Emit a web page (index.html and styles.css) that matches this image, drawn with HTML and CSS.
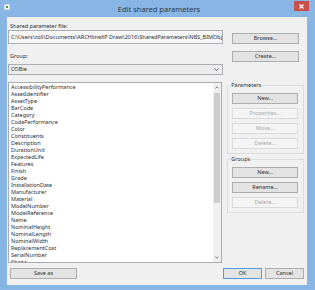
FILE: index.html
```html
<!DOCTYPE html>
<html lang="en">
<head>
    <meta charset="UTF-8">
    <meta name="viewport" content="width=device-width, initial-scale=1.0">
    <title>Edit shared parameters</title>
    <link rel="stylesheet" href="styles.css">
</head>
<body>
    <div class="window">
        <div class="titlebar">
            <div class="app-icon"><span></span></div>
            <div class="title">Edit shared parameters</div>
            <div class="close">
                <svg width="5" height="5" viewBox="0 0 5 5"><path d="M0.5 0.5L4.5 4.5M4.5 0.5L0.5 4.5" stroke="#fff" stroke-width="1.2"/></svg>
            </div>
        </div>
        <div class="client">
            <div class="top">
                <div class="fields">
                    <p class="label first">Shared parameter file:</p>
                    <div class="textbox">C:\Users\zoli\Documents\ARCHlineXP Draw\2016\SharedParameters\NBS_BIMObjects.txt</div>
                    <p class="label second">Group:</p>
                    <div class="combo">
                        <span>COBie</span>
                        <svg width="5" height="3" viewBox="0 0 5 3"><path d="M0.5 0.5L2.5 2.5L4.5 0.5" fill="none" stroke="#555" stroke-width="0.9"/></svg>
                    </div>
                </div>
                <div class="top-buttons">
                    <button class="btn browse">Browse...</button>
                    <button class="btn create">Create...</button>
                </div>
            </div>
            <div class="middle">
                <div class="listbox">
                    <ul class="items">
                        <li>AccessibilityPerformance</li>
                        <li>AssetIdentifier</li>
                        <li>AssetType</li>
                        <li>BarCode</li>
                        <li>Category</li>
                        <li>CodePerformance</li>
                        <li>Color</li>
                        <li>Constituents</li>
                        <li>Description</li>
                        <li>DurationUnit</li>
                        <li>ExpectedLife</li>
                        <li>Features</li>
                        <li>Finish</li>
                        <li>Grade</li>
                        <li>InstallationDate</li>
                        <li>Manufacturer</li>
                        <li>Material</li>
                        <li>ModelNumber</li>
                        <li>ModelReference</li>
                        <li>Name</li>
                        <li>NominalHeight</li>
                        <li>NominalLength</li>
                        <li>NominalWidth</li>
                        <li>ReplacementCost</li>
                        <li>SerialNumber</li>
                        <li>Shape</li>
                    </ul>
                    <div class="scrollbar">
                        <div class="arrow">
                            <svg width="4" height="3" viewBox="0 0 4 3"><path d="M0.4 2.4L2 0.8L3.6 2.4" fill="none" stroke="#606060" stroke-width="0.8"/></svg>
                        </div>
                        <div class="track"><div class="thumb"></div></div>
                        <div class="arrow">
                            <svg width="4" height="3" viewBox="0 0 4 3"><path d="M0.4 0.6L2 2.2L3.6 0.6" fill="none" stroke="#606060" stroke-width="0.8"/></svg>
                        </div>
                    </div>
                </div>
                <div class="side">
                    <fieldset class="group params">
                        <legend>Parameters</legend>
                        <button class="btn">New...</button>
                        <button class="btn" disabled>Properties...</button>
                        <button class="btn" disabled>Move...</button>
                        <button class="btn" disabled>Delete...</button>
                    </fieldset>
                    <fieldset class="group groups">
                        <legend>Groups</legend>
                        <button class="btn">New...</button>
                        <button class="btn">Rename...</button>
                        <button class="btn" disabled>Delete...</button>
                    </fieldset>
                </div>
            </div>
            <div class="bottom">
                <button class="btn save">Save as</button>
                <div class="spacer"></div>
                <button class="btn ok">OK</button>
                <button class="btn cancel">Cancel</button>
            </div>
        </div>
    </div>
</body>
</html>
```

FILE: styles.css
```css
* {
    padding: 0;
    margin: 0;
    box-sizing: border-box;
    font-family: 'Noto Sans', 'Liberation Sans', sans-serif;
}

body {
    background: #ffffff;
}

.window {
    width: 315px;
    height: 290px;
    display: flex;
    flex-direction: column;
    padding: 0 8px 5px 7px;
    background: #87b6e5;
}

.titlebar {
    height: 17px;
    display: flex;
    align-items: flex-start;
    margin: 0 -8px 0 -7px;
    padding: 0 6px 0 4px;
}

.app-icon {
    width: 6px;
    height: 6px;
    margin-top: 4px;
    background: #f6f6f6;
    border: 1px solid #c9d6e2;
    display: flex;
    align-items: center;
    justify-content: center;
}

.app-icon span {
    width: 2px;
    height: 2px;
    background: #3c9a4a;
}

.title {
    flex: 1;
    text-align: center;
    font-size: 7.5px;
    line-height: 18px;
    color: #2b3a4a;
    padding-left: 14px;
}

.close {
    width: 15px;
    height: 10px;
    margin-top: 1px;
    background: #c9504a;
    display: flex;
    align-items: center;
    justify-content: center;
}

.client {
    flex: 1;
    background: #f0f0f0;
    padding: 0 3px 0 1px;
    display: flex;
    flex-direction: column;
    font-size: 5.5px;
    color: #2e2e2e;
}

.top {
    display: flex;
}

.fields {
    width: 215px;
}

.label {
    height: 8px;
    line-height: 8px;
    padding-left: 2px;
}

.label.first {
    margin-top: 5px;
}

.label.second {
    margin-top: 8px;
}

.textbox, .combo {
    border: 1px solid #abadb3;
    white-space: nowrap;
    overflow: hidden;
    padding-left: 2px;
}

.textbox {
    height: 14px;
    line-height: 12px;
    background: #f7f7f7;
}

.combo {
    margin-top: 4px;
    height: 11px;
    line-height: 9px;
    display: flex;
    align-items: center;
    justify-content: space-between;
    padding-right: 3px;
    background: #ececec;
}

.top-buttons {
    margin-left: 9px;
    width: 67px;
    display: flex;
    flex-direction: column;
}

.btn {
    height: 11px;
    width: 100%;
    background: #e3e3e3;
    border: 1px solid #adadad;
    font-size: 5.5px;
    color: #2e2e2e;
    line-height: 9px;
}

.btn:disabled {
    background: #f4f4f4;
    border-color: #dadada;
    color: #a8a8a8;
}

.browse {
    margin-top: 16px;
}

.create {
    margin-top: 7px;
}

.middle {
    display: flex;
    margin-top: 7px;
}

.listbox {
    width: 215px;
    height: 181px;
    background: #ffffff;
    border: 1px solid #abadb3;
    display: flex;
    overflow: hidden;
}

.items {
    flex: 1;
    list-style: none;
    padding: 1px 0 0 2px;
}

.items li {
    height: 7px;
    line-height: 7px;
}

.scrollbar {
    width: 8px;
    background: #f0f0f0;
    display: flex;
    flex-direction: column;
}

.arrow {
    height: 9px;
    display: flex;
    align-items: center;
    justify-content: center;
}

.track {
    flex: 1;
    padding: 1px 1px;
}

.thumb {
    height: 110px;
    background: #cdcdcd;
}

.side {
    margin-left: 5px;
    width: 77px;
    display: flex;
    flex-direction: column;
}

.group {
    border: 1px solid #dcdcdc;
    padding: 0 5px 4px 4px;
    display: flex;
    flex-direction: column;
    gap: 4px;
}

.group legend {
    font-size: 5.5px;
    line-height: 8px;
    padding: 0;
    margin-left: -1px;
    color: #2e2e2e;
}

.params {
    margin-top: -1px;
}

.params .btn:first-of-type {
    margin-top: 4px;
}

.groups {
    margin-top: 1px;
}

.groups .btn:first-of-type {
    margin-top: 4px;
}

.bottom {
    display: flex;
    margin-top: 5px;
    padding-left: 2px;
}

.bottom .btn {
    width: 39px;
}

.bottom .save {
    width: 67px;
}

.spacer {
    flex: 1;
}

.bottom .ok {
    border-color: #4d9be0;
    margin-right: 3px;
}
```
